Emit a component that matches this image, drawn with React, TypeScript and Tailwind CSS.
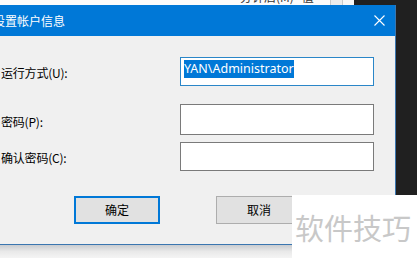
import React from 'react';

const cjk = { fontFamily: '"Noto Sans CJK SC", "Noto Sans", sans-serif' };

const Field: React.FC<{ label: string; h: string; focused?: boolean; value?: string; labelPad?: string }> = ({
  label,
  h,
  focused,
  value,
  labelPad = 'pt-[2px]',
}) => (
  <div className="flex items-center">
    <div className={`w-[180px] pl-[1px] text-[12px] leading-[16px] tracking-[-0.2px] text-[#000] ${labelPad}`}>{label}</div>
    <div
      className={`flex w-[194px] items-start bg-white pl-[3px] pt-[2px] ${h} ${
        focused ? 'border border-[#2a86c8]' : 'border border-[#7a7a7a]'
      }`}
    >
      {value && (
        <span
          className="bg-[#0078d7] text-[12.5px] leading-[18px] text-white"
          style={{ fontFamily: '"Noto Sans", "Noto Sans CJK SC", sans-serif' }}
        >
          {value}
        </span>
      )}
    </div>
  </div>
);

const App: React.FC = () => {
  return (
    <div className="relative h-[258px] w-[417px] overflow-hidden bg-[#f4f4f4]" style={cjk}>
      {/* background windows */}
      <div className="flex h-[5px] w-full overflow-hidden">
        <div className="relative w-[330px] bg-[#fbfbfb]">
          <div className="absolute left-[240px] top-[-10px] flex gap-[8px] text-[12px] leading-[14px] text-[#333]">
            <span>分钟后(M)</span>
            <span>值</span>
          </div>
        </div>
        <div className="w-[13px] border-x border-[#c9c9c9] bg-[#ececec]" />
        <div className="w-[11px] bg-[#f7f7f7]" />
        <div className="flex-1 bg-[#202020]" />
      </div>
      <div className="flex h-[240px] w-full">
        <div className="w-[395px]" />
        <div className="flex-1 bg-[#202020]" />
      </div>
      <div className="h-[13px] w-full bg-gradient-to-b from-[#c9ccd0] via-[#e9e9e9] to-[#f4f4f4]" />

      {/* dialog */}
      <div className="absolute left-0 top-[5px] flex h-[240px] w-[396px] flex-col border-b border-r border-[#3a76b0]">
        <div className="flex h-[31px] items-center justify-between bg-[#0078d7] pr-[10px] text-white">
          <span className="ml-[-7px] pt-[1px] text-[12px] leading-[16px]">设置帐户信息</span>
          <svg width="11" height="11" viewBox="0 0 11 11">
            <path d="M0.5 0.5 L10.5 10.5 M10.5 0.5 L0.5 10.5" stroke="#fff" strokeWidth="1.1" fill="none" />
          </svg>
        </div>
        <div className="flex flex-1 flex-col bg-[#f0f0f0]">
          <div className="mt-[21px]">
            <Field label="运行方式(U):" h="h-[29px]" focused value="YAN\Administrator" labelPad="pt-[3px]" />
          </div>
          <div className="mt-[18px]">
            <Field label="密码(P):" h="h-[31px]" labelPad="pt-[5px]" />
          </div>
          <div className="mt-[7px]">
            <Field label="确认密码(C):" h="h-[29px]" />
          </div>
          <div className="mt-[25px] flex gap-[56px] pl-[74px]">
            <button className="flex h-[28px] w-[86px] items-center justify-center border-2 border-[#0078d7] bg-[#e1e1e1] text-[12px] text-black">
              确定
            </button>
            <button className="flex h-[28px] w-[86px] items-center justify-center border border-[#adadad] bg-[#e1e1e1] text-[12px] text-black">
              取消
            </button>
          </div>
        </div>
      </div>

      {/* watermark */}
      <div className="absolute left-[292px] top-[195px] flex h-[63px] w-[125px] items-center bg-white pl-[3px]">
        <span className="text-[29px] leading-[34px] text-[#c8c8c8]">软件技巧</span>
      </div>
    </div>
  );
};

export default App;
